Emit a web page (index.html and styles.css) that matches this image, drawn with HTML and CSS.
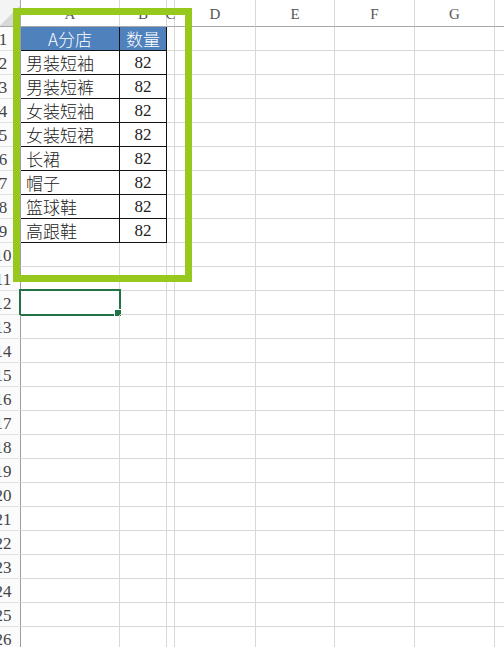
FILE: index.html
```html
<!DOCTYPE html>
<html lang="zh">
<head>
<meta charset="utf-8">
<title>Sheet</title>
<link rel="stylesheet" href="styles.css">
</head>
<body>
<div class="page">
  <div class="sheet">
    <div class="corner"></div><div class="ch">A</div><div class="ch">B</div><div class="ch">C</div><div class="ch">D</div><div class="ch">E</div><div class="ch">F</div><div class="ch">G</div><div class="ch"></div>

    <div class="rh">1</div><div class="t hd">A分店</div><div class="t hd">数量</div><div></div><div></div><div></div><div></div><div></div><div></div>
    <div class="rh">2</div><div class="t name">男装短袖</div><div class="t qty">82</div><div></div><div></div><div></div><div></div><div></div><div></div>
    <div class="rh">3</div><div class="t name">男装短裤</div><div class="t qty">82</div><div></div><div></div><div></div><div></div><div></div><div></div>
    <div class="rh">4</div><div class="t name">女装短袖</div><div class="t qty">82</div><div></div><div></div><div></div><div></div><div></div><div></div>
    <div class="rh">5</div><div class="t name">女装短裙</div><div class="t qty">82</div><div></div><div></div><div></div><div></div><div></div><div></div>
    <div class="rh">6</div><div class="t name">长裙</div><div class="t qty">82</div><div></div><div></div><div></div><div></div><div></div><div></div>
    <div class="rh">7</div><div class="t name">帽子</div><div class="t qty">82</div><div></div><div></div><div></div><div></div><div></div><div></div>
    <div class="rh">8</div><div class="t name">篮球鞋</div><div class="t qty">82</div><div></div><div></div><div></div><div></div><div></div><div></div>
    <div class="rh">9</div><div class="t name">高跟鞋</div><div class="t qty">82</div><div></div><div></div><div></div><div></div><div></div><div></div>
    <div class="rh">10</div><div></div><div></div><div></div><div></div><div></div><div></div><div></div><div></div>
    <div class="rh">11</div><div></div><div></div><div></div><div></div><div></div><div></div><div></div><div></div>
    <div class="rh">12</div><div class="sel"></div><div></div><div></div><div></div><div></div><div></div><div></div><div></div>
    <div class="rh">13</div><div></div><div></div><div></div><div></div><div></div><div></div><div></div><div></div>
    <div class="rh">14</div><div></div><div></div><div></div><div></div><div></div><div></div><div></div><div></div>
    <div class="rh">15</div><div></div><div></div><div></div><div></div><div></div><div></div><div></div><div></div>
    <div class="rh">16</div><div></div><div></div><div></div><div></div><div></div><div></div><div></div><div></div>
    <div class="rh">17</div><div></div><div></div><div></div><div></div><div></div><div></div><div></div><div></div>
    <div class="rh">18</div><div></div><div></div><div></div><div></div><div></div><div></div><div></div><div></div>
    <div class="rh">19</div><div></div><div></div><div></div><div></div><div></div><div></div><div></div><div></div>
    <div class="rh">20</div><div></div><div></div><div></div><div></div><div></div><div></div><div></div><div></div>
    <div class="rh">21</div><div></div><div></div><div></div><div></div><div></div><div></div><div></div><div></div>
    <div class="rh">22</div><div></div><div></div><div></div><div></div><div></div><div></div><div></div><div></div>
    <div class="rh">23</div><div></div><div></div><div></div><div></div><div></div><div></div><div></div><div></div>
    <div class="rh">24</div><div></div><div></div><div></div><div></div><div></div><div></div><div></div><div></div>
    <div class="rh">25</div><div></div><div></div><div></div><div></div><div></div><div></div><div></div><div></div>
    <div class="rh">26</div><div></div><div></div><div></div><div></div><div></div><div></div><div></div><div></div>
  </div>
  <div class="mark"></div>
</div>
</body>
</html>
```

FILE: styles.css
```css
* { box-sizing: border-box; margin: 0; padding: 0; }
html, body { background: #fff; }
body {
  margin: 0;
  font-family: "Liberation Serif", "Noto Sans CJK SC", serif;
}
.page {
  position: relative;
  width: 504px;
  height: 647px;
  overflow: hidden;
}
.sheet {
  display: grid;
  grid-template-columns: 21px 99px 47px 8px 81px 79px 80px 80px 40px;
  grid-template-rows: 27px;
  grid-auto-rows: 24px;
}
.sheet > div {
  position: relative;
  display: flex;
  align-items: center;
  min-width: 0;
  white-space: nowrap;
  border-right: 1px solid #d9d9d9;
  border-bottom: 1px solid #d9d9d9;
}
.corner {
  background: linear-gradient(135deg, #f4f4f4 55%, #d8d8d8 55%);
  border-right-color: #a8a8a8 !important;
  border-bottom-color: #a8a8a8 !important;
}
.ch {
  justify-content: center;
  align-items: flex-end !important;
  padding-bottom: 4px;
  font-size: 15px;
  line-height: 1;
  color: #555;
  border-bottom-color: #a8a8a8 !important;
}
.rh {
  justify-content: center;
  padding-right: 14px;
  padding-top: 2px;
  font-size: 17px;
  color: #444;
  background: #fbfbfb;
  border-right-color: #9c9c9c !important;
  border-bottom-color: #e2e2e2 !important;
}
.t {
  font-size: 17px;
  color: #222;
  border-right-color: #111 !important;
  border-bottom-color: #111 !important;
}
.name {
  padding-left: 5px;
  font-family: "Noto Sans CJK SC", sans-serif;
  font-weight: 300;
}
.qty {
  justify-content: center;
  font-family: "Liberation Serif", serif;
}
.hd {
  justify-content: center;
  background: #4f81bd;
  color: #fff;
  font-family: "Noto Sans CJK SC", sans-serif;
  font-weight: 300;
}
.sel {
  outline: 2px solid #217346;
  outline-offset: -1px;
  margin-left: -1px;
  margin-top: -1px;
}
.sel::after {
  content: "";
  position: absolute;
  right: -3px;
  bottom: -3px;
  width: 6px;
  height: 6px;
  background: #217346;
  border: 1px solid #fff;
}
.mark {
  position: absolute;
  left: 13px;
  top: 8px;
  width: 179px;
  height: 274px;
  border: 7px solid #96c81e;
  pointer-events: none;
}
```
